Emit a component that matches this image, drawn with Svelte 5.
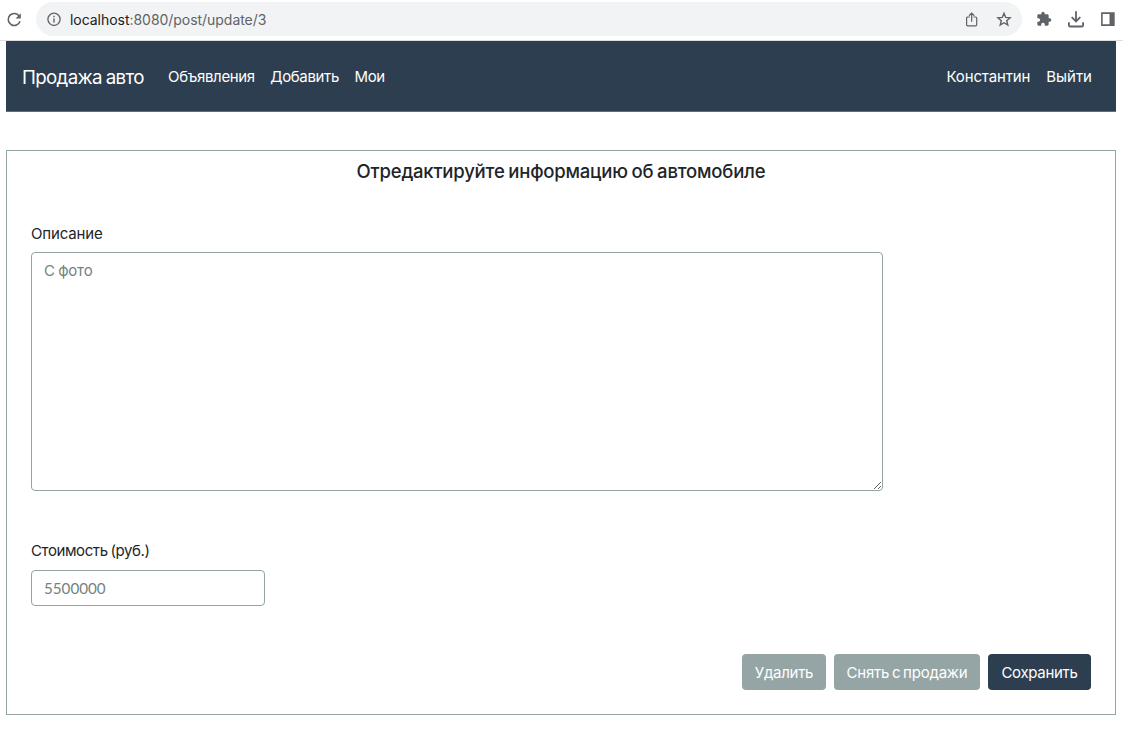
<script>
  const links = [
    { text: 'Объявления', cls: 'ads' },
    { text: 'Добавить', cls: 'add' },
    { text: 'Мои', cls: 'mine' }
  ];
</script>

<div class="page">
  <header class="browser">
    <svg class="reload" width="18" height="18" viewBox="0 0 18 18" fill="none">
      <path d="M14.2 6.1A6 6 0 1 0 15 11.1" stroke="#5f6368" stroke-width="1.6" />
      <path d="M15.8 3.3v5.2H10.6z" fill="#5f6368" />
    </svg>
    <div class="address">
      <svg class="info" width="14" height="14" viewBox="0 0 14 14" fill="none" stroke="#5f6368">
        <circle cx="7" cy="7.3" r="6.1" stroke-width="1.3" />
        <path d="M7 6.5v4M7 3.8v1.5" stroke-width="1.4" />
      </svg>
      <span class="url"><b>localhost</b>:8080/post/update/3</span>
      <svg class="share" width="14" height="16" viewBox="0 0 14 16" fill="none" stroke="#5f6368" stroke-width="1.2">
        <path d="M4.8 6H2.6a1 1 0 0 0-1 1v6.8a1 1 0 0 0 1 1h8.1a1 1 0 0 0 1-1V7a1 1 0 0 0-1-1H8.5M6.65 10.7V2.2M4 4.7l2.65-2.6L9.3 4.7" />
      </svg>
      <svg class="star" width="16" height="16" viewBox="0 0 16 16" fill="none" stroke="#5f6368" stroke-width="1.4">
        <path d="M8 2.3l1.7 4.1 4.4.4-3.4 2.9 1.1 4.3L8 11.7l-3.8 2.3 1.1-4.3L1.9 6.8l4.4-.4z" />
      </svg>
    </div>
    <svg class="puzzle" width="16" height="16" viewBox="0 0 24 24" fill="#5f6368">
      <path d="M20.5 11H19V7c0-1.1-.9-2-2-2h-4V3.5a2.5 2.5 0 0 0-5 0V5H4c-1.1 0-2 .9-2 2v3.8h1.5a2.7 2.7 0 0 1 0 5.4H2V20c0 1.1.9 2 2 2h3.8v-1.5a2.7 2.7 0 0 1 5.4 0V22H17c1.1 0 2-.9 2-2v-4h1.5a2.5 2.5 0 0 0 0-5z" />
    </svg>
    <svg class="download" width="18" height="18" viewBox="0 0 18 18" fill="none" stroke="#5f6368" stroke-width="1.8">
      <path d="M9 1.3v10M4.7 7.2L9 11.5l4.3-4.3M1.9 12.3v2.9q0 1.3 1.3 1.3h11.6q1.3 0 1.3-1.3v-2.9" />
    </svg>
    <svg class="panel" width="14" height="14" viewBox="0 0 14 14" fill="none">
      <path d="M.9 1.1h12v12H.9z" stroke="#5f6368" stroke-width="1.6" />
      <path d="M8.5 1.1h4.4v12H8.5z" fill="#5f6368" />
    </svg>
  </header>

  <nav>
    <span class="brand">Продажа авто</span>
    {#each links as link}
      <span class="link {link.cls}">{link.text}</span>
    {/each}
    <span class="link user">Константин</span>
    <span class="link exit">Выйти</span>
  </nav>

  <main>
    <h5>Отредактируйте информацию об автомобиле</h5>
    <label class="l-desc" for="description">Описание</label>
    <textarea id="description" placeholder="С фото"></textarea>
    <label class="l-price" for="price">Стоимость (руб.)</label>
    <input id="price" placeholder="5500000" />
    <div class="actions">
      <button class="delete">Удалить</button>
      <button class="sold">Снять с продажи</button>
      <button class="save">Сохранить</button>
    </div>
  </main>
</div>

<style>
  :global(body) { background: #fff; }
  .page, .page * { box-sizing: border-box; }
  .page {
    height: 729px;
    overflow: hidden;
    color: #212529;
    font: 15px/24px Inter, sans-serif;
    white-space: nowrap;
  }
  .browser {
    height: 41px;
    display: flex;
    align-items: center;
    padding: 0 8px 2px 5px;
    border-bottom: 1px solid #dcdee0;
  }
  .browser svg { flex: none; display: block; }
  .reload { margin-right: 13px; }
  .address {
    width: 986px;
    height: 34px;
    display: flex;
    align-items: center;
    padding: 0 10px 0 11px;
    border-radius: 17px;
    background: #f1f3f4;
    margin-right: 14px;
  }
  .url { flex: 1; margin-left: 9px; padding-top: 1px; font-size: 14px; letter-spacing: -0.04px; color: #5f6368; }
  .url b { font-weight: 400; color: #202124; }
  .share { margin-right: 17px; }
  .puzzle { margin-right: 15px; }
  .download { margin-right: 16px; }

  nav {
    height: 71px;
    margin: 0 7px 38px 6px;
    padding: 2px 24px 0 16px;
    display: flex;
    align-items: center;
    background: #2c3e50;
    border-bottom: 1px solid #5f6f7c;
    color: #fff;
  }
  .brand { width: 146px; padding-top: 1px; font-size: 18.7px; letter-spacing: -0.65px; word-spacing: -0.8px; }
  .link { margin-right: 15.4px; letter-spacing: -0.34px; }
  .user { margin-left: auto; margin-right: 16px; letter-spacing: -0.15px; }
  .exit { margin-right: 0; letter-spacing: 0; }

  main {
    height: 565px;
    margin: 0 7px 0 6px;
    padding: 8px 24px 0;
    border: 1px solid #95a5a6;
    display: flex;
    flex-direction: column;
  }
  h5 {
    margin: 0 0 39px;
    font-size: 18.5px;
    line-height: 24px;
    font-weight: 500;
    text-align: center;
    letter-spacing: -0.2px;
    word-spacing: -1px;
  }
  label { display: block; height: 24px; }
  .l-desc { margin-bottom: 6px; letter-spacing: -0.15px; }
  .l-price { margin-bottom: 7px; letter-spacing: -0.4px; word-spacing: -1px; }
  textarea, input {
    display: block;
    margin: 0;
    border: 1px solid #95a5a6;
    border-radius: 4px;
    background: #fff;
    outline: none;
  }
  textarea {
    width: 852px;
    height: 239px;
    margin-bottom: 48px;
    padding: 6px 12px;
    font: 15px/24px Inter, sans-serif;
    letter-spacing: -0.2px;
    word-spacing: -0.6px;
  }
  input { width: 234px; height: 36px; padding: 5px 12px 6px; font: 15.2px/23px Lato, sans-serif; }
  ::placeholder { color: #738383; opacity: 1; }
  .actions { display: flex; justify-content: flex-end; gap: 8px; margin-top: 48px; }
  button {
    height: 36px;
    padding: 1px 0 0;
    border: 0;
    border-radius: 4px;
    background: #95a5a6;
    color: #fff;
    font: 15px/24px Inter, sans-serif;
    letter-spacing: -0.3px;
  }
  .delete { width: 84px; }
  .sold { width: 146px; letter-spacing: -0.2px; word-spacing: -1.3px; }
  .save { width: 103px; background: #2c3e50; }
</style>
